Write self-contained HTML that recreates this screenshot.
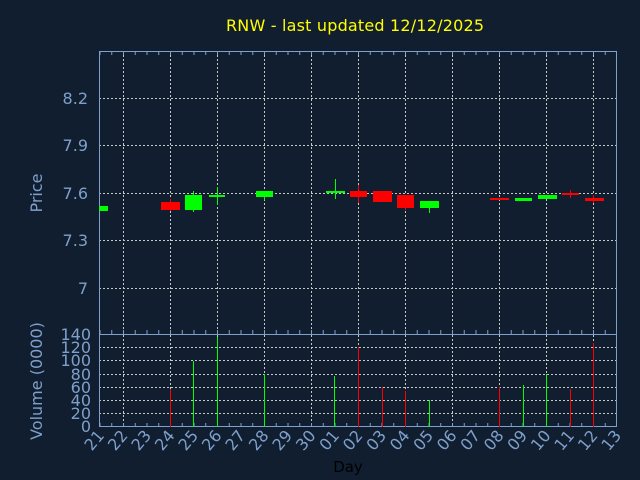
<!DOCTYPE html>
<html><head><meta charset="utf-8"><style>
html,body{margin:0;padding:0;background:#101e2f;}
svg{display:block;font-family:"DejaVu Sans","Liberation Sans",sans-serif;}
</style></head><body>
<svg width="640" height="480" viewBox="0 0 640 480" xmlns="http://www.w3.org/2000/svg">
<defs>
<pattern id="tk" x="99.5" y="0" width="11.75" height="480" patternUnits="userSpaceOnUse">
<rect x="0" y="0" width="1" height="480" fill="#7ea0cc"/>
</pattern>
</defs>
<rect width="640" height="480" fill="#101e2f"/>
<text x="355" y="31" fill="#ffff00" font-size="16" text-anchor="middle" textLength="258">RNW - last updated 12/12/2025</text>
<g stroke="#c8c8c8" stroke-width="1" stroke-dasharray="2,2">
<path d="M123.5 51V427M170.5 51V427M217.5 51V427M264.5 51V427M311.5 51V427M358.5 51V427M405.5 51V427M452.5 51V427M499.5 51V427M546.5 51V427M593.5 51V427"/>
<path d="M99 98.5H617M99 145.5H617M99 193.5H617M99 240.5H617M99 288.5H617"/>
<path d="M99 413.5H617M99 400.5H617M99 387.5H617M99 374.5H617M99 360.5H617M99 347.5H617"/>
</g>
<rect x="99" y="52" width="518" height="3" fill="url(#tk)"/>
<rect x="99" y="330" width="518" height="4" fill="url(#tk)"/>
<rect x="99" y="423" width="518" height="4" fill="url(#tk)"/>
<g fill="none" stroke="#7ea0cc" stroke-width="1">
<rect x="99.5" y="51.5" width="517" height="283"/>
<rect x="99.5" y="334.5" width="517" height="92"/>
</g>
<g stroke-width="1">
<rect x="99" y="206" width="9" height="5" fill="#00ff00"/>
<line x1="170.5" y1="199" x2="170.5" y2="211" stroke="#ff0000"/><rect x="161" y="202" width="19" height="8" fill="#ff0000"/>
<line x1="193.5" y1="191" x2="193.5" y2="212" stroke="#00ff00"/><rect x="185" y="195" width="17" height="15" fill="#00ff00"/>
<line x1="217.5" y1="187" x2="217.5" y2="205" stroke="#00ff00"/><rect x="209" y="195" width="16" height="2" fill="#00ff00"/>
<line x1="264.5" y1="191" x2="264.5" y2="200" stroke="#00ff00"/><rect x="256" y="191" width="17" height="6" fill="#00ff00"/>
<line x1="335.5" y1="179" x2="335.5" y2="199" stroke="#00ff00"/><rect x="326" y="191" width="19" height="2" fill="#00ff00"/>
<line x1="358.5" y1="185" x2="358.5" y2="203" stroke="#ff0000"/><rect x="350" y="191" width="17" height="6" fill="#ff0000"/>
<rect x="373" y="191" width="19" height="11" fill="#ff0000"/>
<line x1="405.5" y1="195" x2="405.5" y2="210" stroke="#ff0000"/><rect x="397" y="195" width="17" height="13" fill="#ff0000"/>
<line x1="429.5" y1="201" x2="429.5" y2="213" stroke="#00ff00"/><rect x="420" y="201" width="19" height="7" fill="#00ff00"/>
<rect x="490" y="198" width="19" height="2" fill="#ff0000"/>
<rect x="515" y="198" width="17" height="3" fill="#00ff00"/>
<rect x="538" y="195" width="19" height="4" fill="#00ff00"/>
<line x1="570.5" y1="190" x2="570.5" y2="198" stroke="#ff0000"/><rect x="562" y="193" width="17" height="2" fill="#ff0000"/>
<line x1="593.5" y1="195" x2="593.5" y2="203" stroke="#ff0000"/><rect x="585" y="198" width="19" height="3" fill="#ff0000"/>
</g>
<g stroke-width="1">
<path d="M170.5 427V389M358.5 427V347M382.5 427V387M405.5 427V391M499.5 427V387M570.5 427V389M593.5 427V343" stroke="#ff0000"/>
<path d="M193.5 427V361M217.5 427V337M264.5 427V374M334.5 427V376M429.5 427V400M523.5 427V385M546.5 427V374" stroke="#00ff00"/>
</g>
<g fill="#7ea0cc" font-size="16" text-anchor="end">
<text x="88" y="104">8.2</text><text x="88" y="151">7.9</text><text x="88" y="199">7.6</text><text x="88" y="246">7.3</text><text x="88" y="294">7</text>
</g>
<g fill="#7ea0cc" font-size="16" text-anchor="end">
<text x="91" y="340">140</text><text x="91" y="353">120</text><text x="91" y="366">100</text><text x="91" y="380">80</text><text x="91" y="393">60</text><text x="91" y="406">40</text><text x="91" y="419">20</text><text x="91" y="432">0</text>
</g>
<text transform="translate(42,193) rotate(-90)" fill="#7ea0cc" font-size="16" text-anchor="middle">Price</text>
<text transform="translate(42,381) rotate(-90)" fill="#7ea0cc" font-size="16" text-anchor="middle">Volume (0000)</text>
<g fill="#7ea0cc" font-size="16" text-anchor="end">
<text transform="translate(105,436) rotate(-50)">21</text>
<text transform="translate(128.5,436) rotate(-50)">22</text>
<text transform="translate(152,436) rotate(-50)">23</text>
<text transform="translate(175.5,436) rotate(-50)">24</text>
<text transform="translate(199,436) rotate(-50)">25</text>
<text transform="translate(222.5,436) rotate(-50)">26</text>
<text transform="translate(246,436) rotate(-50)">27</text>
<text transform="translate(269.5,436) rotate(-50)">28</text>
<text transform="translate(293,436) rotate(-50)">29</text>
<text transform="translate(316.5,436) rotate(-50)">30</text>
<text transform="translate(340,436) rotate(-50)">01</text>
<text transform="translate(363.5,436) rotate(-50)">02</text>
<text transform="translate(387,436) rotate(-50)">03</text>
<text transform="translate(410.5,436) rotate(-50)">04</text>
<text transform="translate(434,436) rotate(-50)">05</text>
<text transform="translate(457.5,436) rotate(-50)">06</text>
<text transform="translate(481,436) rotate(-50)">07</text>
<text transform="translate(504.5,436) rotate(-50)">08</text>
<text transform="translate(528,436) rotate(-50)">09</text>
<text transform="translate(551.5,436) rotate(-50)">10</text>
<text transform="translate(575,436) rotate(-50)">11</text>
<text transform="translate(598.5,436) rotate(-50)">12</text>
<text transform="translate(622,436) rotate(-50)">13</text>
</g>
<text x="348" y="472" fill="#000000" font-size="15" text-anchor="middle">Day</text>
</svg>
</body></html>
